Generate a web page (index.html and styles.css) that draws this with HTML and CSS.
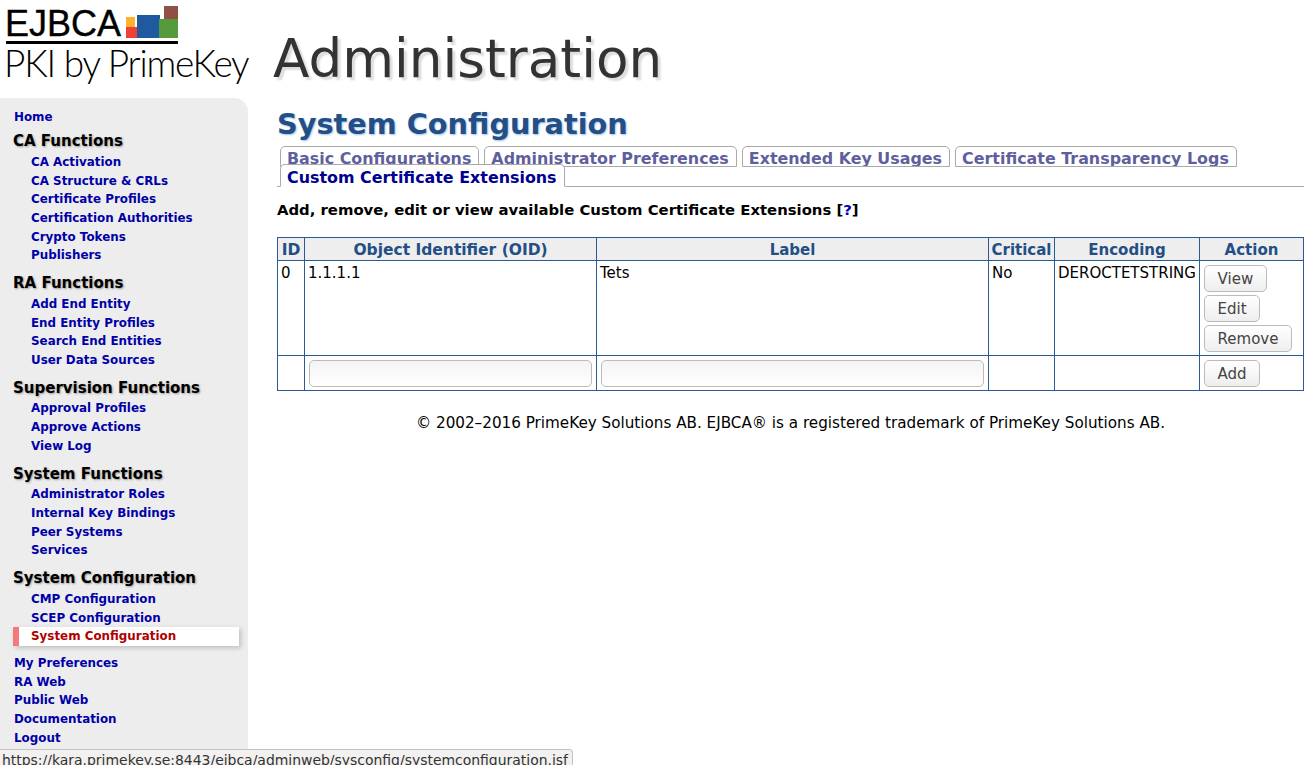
FILE: index.html
```html
<!DOCTYPE html>
<html lang="en">
<head>
  <meta charset="UTF-8">
  <title>EJBCA Administration</title>
  <link rel="stylesheet" href="styles.css">
</head>
<body>

<header class="banner">
  <div class="logo">
    <div class="logo-top">
      <span class="logo-name">EJBCA</span>
      <svg class="logo-boxes" width="52" height="32" viewBox="0 0 52 32">
        <rect x="0" y="11" width="9" height="10" fill="#fdb32b"/>
        <rect x="0" y="21" width="11" height="11" fill="#ee4036"/>
        <rect x="11" y="9" width="23" height="23" fill="#1f5aa0"/>
        <rect x="33" y="13" width="19" height="19" fill="#559a3c"/>
        <rect x="38" y="0" width="14" height="13" fill="#915046"/>
      </svg>
    </div>
    <div class="logo-rule"></div>
    <div class="logo-sub">PKI by PrimeKey</div>
  </div>
  <h1 class="app-title">Administration</h1>
</header>

<div class="page">
  <nav class="sidebar">
    <a class="nav-top" href="#">Home</a>

    <h3 class="nav-head">CA Functions</h3>
    <a class="nav-sub" href="#">CA Activation</a>
    <a class="nav-sub" href="#">CA Structure &amp; CRLs</a>
    <a class="nav-sub" href="#">Certificate Profiles</a>
    <a class="nav-sub" href="#">Certification Authorities</a>
    <a class="nav-sub" href="#">Crypto Tokens</a>
    <a class="nav-sub" href="#">Publishers</a>

    <h3 class="nav-head">RA Functions</h3>
    <a class="nav-sub" href="#">Add End Entity</a>
    <a class="nav-sub" href="#">End Entity Profiles</a>
    <a class="nav-sub" href="#">Search End Entities</a>
    <a class="nav-sub" href="#">User Data Sources</a>

    <h3 class="nav-head">Supervision Functions</h3>
    <a class="nav-sub" href="#">Approval Profiles</a>
    <a class="nav-sub" href="#">Approve Actions</a>
    <a class="nav-sub" href="#">View Log</a>

    <h3 class="nav-head">System Functions</h3>
    <a class="nav-sub" href="#">Administrator Roles</a>
    <a class="nav-sub" href="#">Internal Key Bindings</a>
    <a class="nav-sub" href="#">Peer Systems</a>
    <a class="nav-sub" href="#">Services</a>

    <h3 class="nav-head">System Configuration</h3>
    <a class="nav-sub" href="#">CMP Configuration</a>
    <a class="nav-sub" href="#">SCEP Configuration</a>
    <a class="nav-sub nav-current" href="#">System Configuration</a>

    <a class="nav-top nav-first" href="#">My Preferences</a>
    <a class="nav-top" href="#">RA Web</a>
    <a class="nav-top" href="#">Public Web</a>
    <a class="nav-top" href="#">Documentation</a>
    <a class="nav-top" href="#">Logout</a>
  </nav>

  <main class="content">
    <h2 class="page-title">System Configuration</h2>

    <div class="tabs">
      <a class="tab" href="#">Basic Configurations</a>
      <a class="tab" href="#">Administrator Preferences</a>
      <a class="tab" href="#">Extended Key Usages</a>
      <a class="tab" href="#">Certificate Transparency Logs</a>
      <a class="tab tab-active" href="#">Custom Certificate Extensions</a>
    </div>

    <p class="intro">Add, remove, edit or view available Custom Certificate Extensions [<a href="#">?</a>]</p>

    <table class="grid">
      <thead>
        <tr>
          <th class="col-id">ID</th>
          <th class="col-oid">Object Identifier (OID)</th>
          <th class="col-label">Label</th>
          <th class="col-critical">Critical</th>
          <th class="col-encoding">Encoding</th>
          <th>Action</th>
        </tr>
      </thead>
      <tbody>
        <tr>
          <td>0</td>
          <td>1.1.1.1</td>
          <td>Tets</td>
          <td>No</td>
          <td>DEROCTETSTRING</td>
          <td class="actions">
            <button class="btn">View</button>
            <button class="btn">Edit</button>
            <button class="btn">Remove</button>
          </td>
        </tr>
        <tr>
          <td></td>
          <td class="field"><input class="text-input" type="text"></td>
          <td class="field"><input class="text-input" type="text"></td>
          <td></td>
          <td></td>
          <td class="actions"><button class="btn">Add</button></td>
        </tr>
      </tbody>
    </table>

    <p class="copyright">© 2002–2016 PrimeKey Solutions AB. EJBCA® is a registered trademark of PrimeKey Solutions AB.</p>
  </main>
</div>

<div class="status-bar">https://kara.primekey.se:8443/ejbca/adminweb/sysconfig/systemconfiguration.jsf</div>

</body>
</html>
```

FILE: styles.css
```css
html, body {
  height: 100%;
}
body {
  margin: 0;
  background: #fff;
  color: #000;
  font-family: "DejaVu Sans", Verdana, sans-serif;
  font-size: 14px;
  overflow: hidden;
}

/* banner */
.banner {
  display: flex;
  height: 98px;
  padding-left: 6px;
}
.logo {
  width: 243px;
  padding-top: 6px;
}
.logo-top {
  display: flex;
  align-items: flex-end;
  height: 32px;
  width: 172px;
}
.logo-name {
  font-family: "Liberation Sans", Arial, sans-serif;
  font-size: 36px;
  line-height: 36px;
  width: 121px;
  height: 32px;
  margin-left: -1px;
  -webkit-text-stroke: 0.4px #000;
}
.logo-boxes {
  display: block;
}
.logo-rule {
  width: 172px;
  height: 3px;
  margin-top: 3px;
  background: #000;
}
.logo-sub {
  margin-left: -2px;
  font-family: Lato, "Liberation Sans", sans-serif;
  font-weight: 300;
  font-size: 37px;
  line-height: 37px;
  letter-spacing: -1.2px;
  white-space: nowrap;
}
.app-title {
  margin: 28px 0 0 24px;
  font-size: 53.2px;
  font-weight: normal;
  line-height: 62px;
  color: #333;
  text-shadow: 3px 3px 2px #ddd;
}

/* layout */
.page {
  display: flex;
  align-items: flex-start;
}

/* left menu */
.sidebar {
  flex: none;
  width: 234px;
  height: 641px;
  padding: 10px 0 0 14px;
  background: #ededed;
  border-top-right-radius: 14px;
}
.sidebar a {
  display: block;
  height: 18.7px;
  line-height: 18.7px;
  font-size: 11.9px;
  font-weight: bold;
  color: #0000a8;
  text-decoration: none;
}
.nav-head {
  margin: 8px 0 0 -1px;
  height: 21.8px;
  line-height: 21px;
  font-size: 15px;
  font-weight: bold;
  color: #000;
  text-shadow: 1px 1px 2px #999;
}
.nav-top + .nav-head {
  margin-top: 4.5px;
}
.sidebar .nav-sub {
  padding-left: 17px;
}
.sidebar .nav-current {
  margin: 0 9px 0 -1px;
  padding-left: 12px;
  border-left: 6px solid #f47a7a;
  background: #fff;
  color: #b00000;
  box-shadow: 2px 2px 5px rgba(0, 0, 0, 0.2);
}
.sidebar .nav-first {
  margin-top: 8px;
}

/* main column */
.content {
  flex: 1;
  min-width: 0;
  padding: 6px 4px 0 29px;
}
.page-title {
  margin: 0;
  height: 42px;
  line-height: 40px;
  font-size: 28.75px;
  font-weight: bold;
  color: #234f86;
  text-shadow: 1px 1px 2px #9fc3e6;
}

.tabs {
  display: flex;
  flex-wrap: wrap;
  align-content: flex-start;
  box-sizing: border-box;
  height: 41px;
  padding-left: 3px;
  column-gap: 5px;
  border-bottom: 1px solid #aaa;
}
.tab {
  box-sizing: border-box;
  height: 21px;
  padding: 0 7px 0 6px;
  line-height: 24px;
  font-size: 15.9px;
  font-weight: bold;
  color: #5f5f9d;
  text-decoration: none;
  background: #fff;
  border: 1px solid #aaa;
  border-radius: 5px 5px 0 0;
  overflow: hidden;
}
.tab-active {
  position: relative;
  height: 23px;
  margin-top: -3px;
  line-height: 26px;
  color: #00008f;
  border-bottom-color: #fff;
}

.intro {
  margin: 13px 0 0;
  height: 37px;
  line-height: 20px;
  font-size: 14.85px;
  font-weight: bold;
}
.intro a {
  color: #0000a8;
  text-decoration: none;
}

/* table */
.grid {
  width: 1027px;
  table-layout: fixed;
  border-collapse: collapse;
  font-size: 15px;
}
.grid th, .grid td {
  border: 1px solid #2b5a94;
  padding: 3px;
  vertical-align: top;
  text-align: left;
}
.grid th {
  height: 16px;
  padding: 4px 0 2px;
  background: #eee;
  color: #234f86;
  font-size: 15px;
  line-height: 16px;
  text-align: center;
  white-space: nowrap;
}
.grid th.col-id, .grid th.col-oid {
  font-size: 15.5px;
}
.col-id { width: 26px; }
.col-oid { width: 291px; }
.col-label { width: 391px; }
.col-critical { width: 65px; }
.col-encoding { width: 144px; }

.grid td.actions {
  padding: 4px 4px 0;
}
.btn {
  display: block;
  box-sizing: border-box;
  height: 27px;
  margin-bottom: 3px;
  padding: 0 12.6px;
  font-family: "DejaVu Sans", Verdana, sans-serif;
  font-size: 15px;
  color: #444;
  background: linear-gradient(#fff, #eee);
  border: 1px solid #bbb;
  border-radius: 5px;
}
.grid td.field {
  padding: 4px 4px 3px;
}
.text-input {
  display: block;
  box-sizing: border-box;
  width: 100%;
  height: 27px;
  background: linear-gradient(#f4f4f4, #fff);
  border: 1px solid #bbb;
  border-radius: 5px;
}

.copyright {
  margin: 23px 0 0;
  text-align: center;
  font-size: 15.2px;
}

/* link hover bubble at the bottom of the window */
.status-bar {
  position: fixed;
  left: 0;
  bottom: 0;
  width: 573px;
  height: 16px;
  line-height: 21px;
  padding-left: 2px;
  box-sizing: border-box;
  font-size: 13.95px;
  color: #333;
  background: #f2f1f0;
  border-top: 1px solid #c4c2bf;
  border-right: 1px solid #c4c2bf;
  border-top-right-radius: 4px;
  overflow: hidden;
  white-space: nowrap;
}
```
